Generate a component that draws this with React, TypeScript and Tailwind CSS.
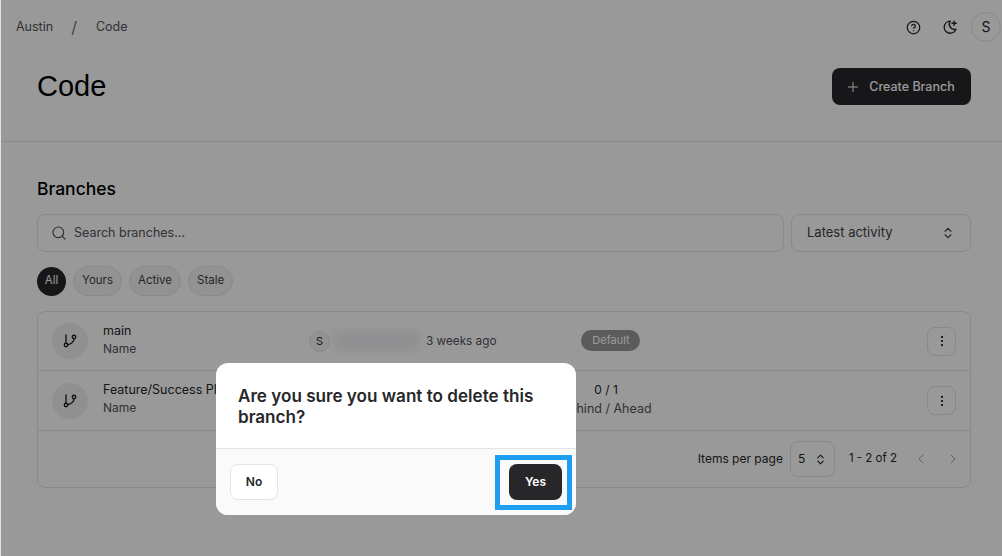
import { ChevronLeft, ChevronRight, ChevronsUpDown, CircleHelp, EllipsisVertical, Plus, Search } from 'lucide-react';

function MoonPlus() {
  return (
    <svg width="17" height="17" viewBox="0 0 24 24" fill="none" stroke="currentColor" strokeWidth="2" strokeLinecap="round" strokeLinejoin="round">
      <path d="M13 3a8.5 8.5 0 1 0 8 11.5A7.5 7.5 0 0 1 13 3Z" />
      <path d="M18.5 3v6M15.5 6h6" />
    </svg>
  );
}

function BranchIcon() {
  return (
    <svg width="16" height="16" viewBox="0 0 24 24" fill="none" stroke="currentColor" strokeWidth="2" strokeLinecap="round" strokeLinejoin="round" className="text-[#1f1f22]">
      <circle cx="6" cy="18" r="2.6" />
      <circle cx="18" cy="6" r="2.6" />
      <path d="M6 3v12.4M18 8.6c0 5-4 7.4-9.6 9.2" />
    </svg>
  );
}

function Chip({ label, active }: { label: string; active?: boolean }) {
  return (
    <div
      className={
        active
          ? 'h-[29px] w-[29px] rounded-full bg-[#27272a] text-white text-[11.5px] flex items-center justify-center'
          : 'h-[30px] px-[8px] rounded-full bg-[#f4f4f5] border border-[#e4e4e7] text-[#3f3f46] text-[11.5px] flex items-center justify-center'
      }
    >
      {label}
    </div>
  );
}

function RowMenu() {
  return (
    <button className="w-[29px] h-[29px] rounded-lg border border-[#e4e4e7] flex items-center justify-center text-[#18181b]">
      <EllipsisVertical size={14} strokeWidth={1.75} />
    </button>
  );
}

function BranchAvatar() {
  return (
    <div className="w-9 h-9 rounded-full bg-[#f1f1f2] flex items-center justify-center">
      <BranchIcon />
    </div>
  );
}

export default function App() {
  return (
    <div className="relative h-[556px] w-[1002px] overflow-hidden bg-white font-['Inter',sans-serif] border-l border-[#e4e4e7]">
      <header className="h-[54px] flex items-center justify-between pl-[15px] pr-[1px]">
        <div className="flex items-center text-[12.5px] text-[#52525b]">
          <span>Austin</span>
          <span className="ml-[18px] mr-[19px] text-base text-[#71717a]">/</span>
          <span>Code</span>
        </div>
        <div className="flex items-center text-[#27272a]">
          <CircleHelp size={15} />
          <span className="ml-[20px] flex"><MoonPlus /></span>
          <div className="ml-[13px] w-[30px] h-[30px] rounded-full border border-[#e4e4e7] flex items-center justify-center text-sm">
            S
          </div>
        </div>
      </header>

      <div className="h-[88px] pl-9 pr-[31px] pt-[14px] flex items-start justify-between border-b border-[#e4e4e7]">
        <h1 className="text-[29px] leading-9 text-black font-['Liberation_Sans',sans-serif]">Code</h1>
        <button className="w-[139px] h-[37px] pr-[3px] rounded-lg bg-[#27272a] text-white text-[12.5px] font-medium flex items-center justify-center gap-[8px]">
          <Plus size={16} strokeWidth={1.5} />
          <span className="mt-[1px]">Create Branch</span>
        </button>
      </div>

      <main className="pl-9 pr-[31px] pt-[35px]">
        <h2 className="text-[17.5px] leading-6 font-medium text-black">Branches</h2>

        <div className="mt-[13px] flex gap-[7px]">
          <div className="flex-1 h-[38px] rounded-lg border border-[#e4e4e7] flex items-center pl-[13px] gap-[7px] text-[12.5px] text-[#52525b]">
            <Search size={16} strokeWidth={1.75} />
            Search branches...
          </div>
          <div className="w-[180px] h-[38px] rounded-lg border border-[#e4e4e7] flex items-center justify-between px-[15px] text-[13px] text-[#3f3f46]">
            <span className="mb-[1px]">Latest activity</span>
            <ChevronsUpDown size={14} />
          </div>
        </div>

        <div className="mt-[14px] flex items-center gap-[7px]">
          <Chip label="All" active />
          <Chip label="Yours" />
          <Chip label="Active" />
          <Chip label="Stale" />
        </div>

        <div className="mt-[15px] rounded-lg border border-[#e4e4e7]">
          <div className="h-[59px] flex items-center px-[14px] border-b border-[#e4e4e7]">
            <BranchAvatar />
            <div className="ml-[15px] w-[206px] pb-[2px]">
              <p className="text-[12.5px] text-[#27272a] leading-4">main</p>
              <p className="text-xs leading-4 mt-[2px] text-[#52525b]">Name</p>
            </div>
            <div className="w-[21px] h-[21px] rounded-full bg-[#f4f4f5] border border-[#e4e4e7] flex items-center justify-center text-[11px] text-[#27272a]">
              S
            </div>
            <div className="ml-1 w-[85px] h-5 rounded bg-[#f1f1f3] blur-[3px]" />
            <span className="ml-[7px] mt-[1px] text-[11.75px] text-[#52525b]">3 weeks ago</span>
            <span className="ml-[85px] mb-[1px] h-[21px] w-[59px] rounded-full bg-[#989898] text-white text-[11px] flex items-center justify-center">
              Default
            </span>
            <div className="ml-auto"><RowMenu /></div>
          </div>

          <div className="h-[60px] flex items-center px-[14px] border-b border-[#e4e4e7]">
            <BranchAvatar />
            <div className="ml-[15px] w-[206px] pb-[3px]">
              <p className="text-[12.5px] text-[#27272a] leading-4 whitespace-nowrap">Feature/Success Plan</p>
              <p className="text-xs leading-4 mt-[2px] text-[#52525b]">Name</p>
            </div>
            <div className="ml-[252px] w-[90px] pb-[3px] text-center">
              <p className="text-xs leading-4 text-[#27272a]">0 / 1</p>
              <p className="text-[12.5px] leading-4 mt-[3px] text-[#52525b] whitespace-nowrap">Behind / Ahead</p>
            </div>
            <div className="ml-auto"><RowMenu /></div>
          </div>

          <div className="h-[56px] flex items-center justify-end pr-[9px] text-xs text-[#27272a]">
            <span className="text-xs">Items per page</span>
            <div className="ml-[7px] w-[45px] h-[36px] rounded-lg border border-[#e4e4e7] flex items-center justify-between px-[7px]">
              5
              <ChevronsUpDown size={13} />
            </div>
            <span className="ml-[14px] text-[11.5px]">1 - 2 of 2</span>
            <ChevronLeft size={16} strokeWidth={1.5} className="ml-[16px] text-[#a1a1aa]" />
            <ChevronRight size={16} strokeWidth={1.5} className="ml-4 text-[#a1a1aa]" />
          </div>
        </div>
      </main>

      <div className="absolute inset-0 bg-black/40" />

      <div className="absolute left-[215px] top-[363px] w-[360px] h-[152px] rounded-xl bg-white overflow-hidden">
        <div className="h-[86px] border-b border-[#e4e4e7] px-[22px] pt-[22px]">
          <p className="text-[17.1px] leading-[21px] font-semibold text-[#27272a]">
            Are you sure you want to delete this branch?
          </p>
        </div>
        <div className="h-[66px] bg-[#fafafa] flex items-center justify-between px-[14px]">
          <button className="w-[48px] h-[36px] rounded-lg bg-white border border-[#e4e4e7] text-xs font-semibold text-[#27272a]">
            No
          </button>
          <div className="relative">
            <button className="w-[53px] h-[36px] rounded-lg bg-[#27272a] text-white text-xs font-semibold">
              Yes
            </button>
            <div className="absolute -left-[14px] -right-[10px] -top-[9px] -bottom-[10px] border-[5px] border-[#1e9ff2]" />
          </div>
        </div>
      </div>
    </div>
  );
}
